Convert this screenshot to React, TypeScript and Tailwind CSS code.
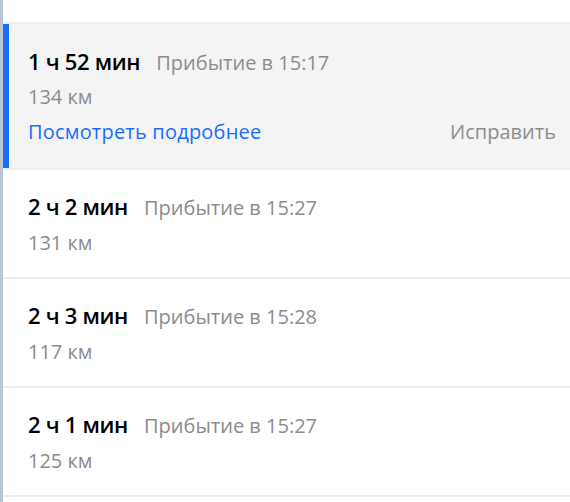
const routes = [
  { time: "1 ч 52 мин", arrival: "15:17", distance: "134 км", active: true },
  { time: "2 ч 2 мин", arrival: "15:27", distance: "131 км" },
  { time: "2 ч 3 мин", arrival: "15:28", distance: "117 км" },
  { time: "2 ч 1 мин", arrival: "15:27", distance: "125 км" },
];

function RouteItem({ time, arrival, distance, active }: { time: string; arrival: string; distance: string; active?: boolean }) {
  return (
    <div className={`relative border-b-2 border-[#ececec] pl-[25px] pr-[14px] ${active ? "bg-[#f4f4f4] pt-[24px] pb-[24px]" : "bg-white pt-[23px] pb-[22px]"}`}>
      {active && <div className="absolute left-0 top-0 bottom-0 w-[6px] bg-[#1a6dff]" />}
      <div className="flex items-baseline gap-[16px] leading-[26px]">
        <span className="text-[22px] font-semibold text-black tracking-[-0.3px]">{time}</span>
        <span className="text-[20px] text-[#8c8c8c]">Прибытие в {arrival}</span>
      </div>
      <div className={`${active ? "mt-[9px]" : "mt-[10px]"} text-[20px] text-[#8c8c8c] leading-[24px]`}>{distance}</div>
      {active && (
        <div className="mt-[11px] flex justify-between text-[20px] leading-[24px]">
          <span className="text-[#1a6dff] tracking-[0.2px]">Посмотреть подробнее</span>
          <span className="text-[#8c8c8c]">Исправить</span>
        </div>
      )}
    </div>
  );
}

export default function App() {
  return (
    <div className="flex h-[502px] w-[570px] overflow-hidden bg-white font-['Open_Sans',sans-serif]">
      <div className="w-[3px] shrink-0 bg-[#b9c6d0]" />
      <div className="flex-1">
        <div className="h-[24px] border-b-2 border-[#ececec] bg-white" />
        {routes.map((r) => (
          <RouteItem key={r.time} {...r} />
        ))}
      </div>
    </div>
  );
}
